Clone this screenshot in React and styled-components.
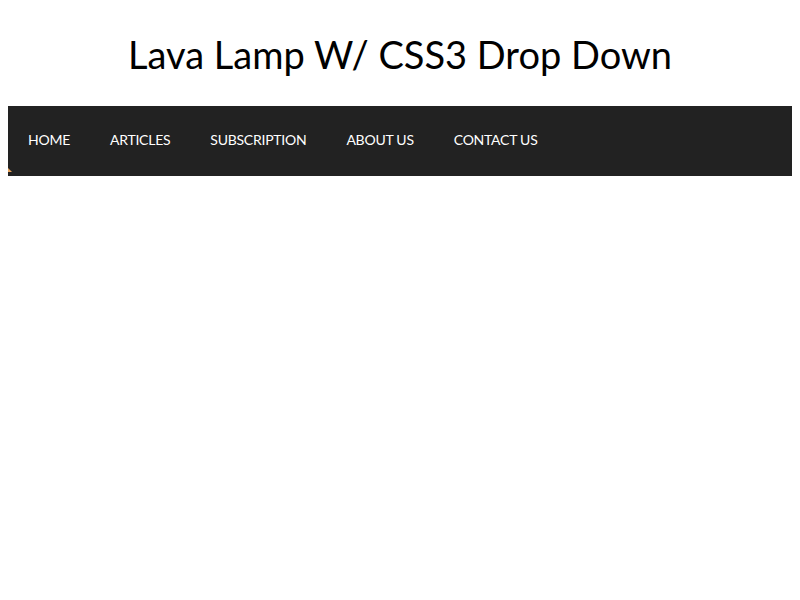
import React from 'react';
import styled, {createGlobalStyle} from 'styled-components';

const Global = createGlobalStyle`
  body {
    margin: 8px;
    background: #fff;
    font-family: "Lato", "Open Sans", sans-serif;
  }
`;

const Title = styled.h1`
  margin: 0;
  height: 98px;
  line-height: 92px;
  text-align: center;
  font-size: 38px;
  font-weight: 400;
  color: #000;
`;

const Nav = styled.nav`
  position: relative;
  height: 70px;
  background: #222;
`;

const Menu = styled.ul`
  display: flex;
  margin: 0;
  padding: 0;
  list-style: none;
`;

const Item = styled.li`
  padding: 0 20px;
  line-height: 68px;
  font-size: 14px;
  letter-spacing: -0.25px;
  color: #fff;
  text-transform: uppercase;
  cursor: pointer;
`;

// lava lamp marker, parked at the left edge
const Lamp = styled.span`
  position: absolute;
  left: -4px;
  bottom: 4px;
  width: 0;
  height: 0;
  border-left: 4px solid transparent;
  border-right: 4px solid transparent;
  border-bottom: 4px solid #e8a45c;
`;

const items = ['Home', 'Articles', 'Subscription', 'About Us', 'Contact Us'];

const App = () => (
  <>
    <Global/>
    <Title>Lava Lamp W/ CSS3 Drop Down</Title>
    <Nav>
      <Menu>
        {items.map(i => <Item key={i}>{i}</Item>)}
      </Menu>
      <Lamp/>
    </Nav>
  </>
);

export default App;
